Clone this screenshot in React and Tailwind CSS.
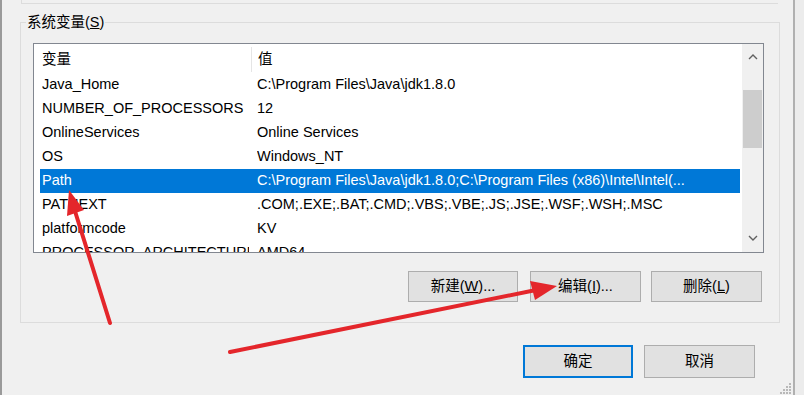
import React from "react";

const rows = [
  ["Java_Home", "C:\\Program Files\\Java\\jdk1.8.0"],
  ["NUMBER_OF_PROCESSORS", "12"],
  ["OnlineServices", "Online Services"],
  ["OS", "Windows_NT"],
  ["Path", "C:\\Program Files\\Java\\jdk1.8.0;C:\\Program Files (x86)\\Intel\\Intel(..."],
  ["PATHEXT", ".COM;.EXE;.BAT;.CMD;.VBS;.VBE;.JS;.JSE;.WSF;.WSH;.MSC"],
  ["platformcode", "KV"],
  ["PROCESSOR_ARCHITECTURE", "AMD64"],
];

function Chevron({ up }) {
  return (
    <svg width="10" height="6" viewBox="0 0 10 6">
      <polyline
        points={up ? "1,5 5,1 9,5" : "1,1 5,5 9,1"}
        fill="none"
        stroke="#606060"
        strokeWidth="1.4"
      />
    </svg>
  );
}

function Button({ children, className = "" }) {
  return (
    <div
      className={
        "flex items-center justify-center bg-[#e1e1e1] text-[14.5px] text-black " +
        className
      }
    >
      {children}
    </div>
  );
}

function VarList() {
  return (
    <div className="ml-[12px] mt-[11px] w-[731px] h-[210px] border border-[#828790] bg-white flex">
      <div className="flex-1 overflow-hidden">
        <div className="h-[28px] flex items-center text-[14.5px] pt-[3px]">
          <div className="w-[218px] h-full pl-[8px] flex items-center border-r border-[#e5e5e5]">变量</div>
          <div className="pl-[6px]">值</div>
        </div>
        <div className="pl-[6px] pt-[1px]">
          {rows.map(([name, value]) => {
            const sel = name === "Path";
            return (
              <div
                key={name}
                className={
                  "w-[700px] h-[24px] flex items-center text-[14.5px] whitespace-nowrap " +
                  (sel ? "bg-[#0078d7] text-white" : "text-black")
                }
              >
                <div className="w-[217px] pl-[2px]">
                  <div className="w-[207px] overflow-hidden">{name}</div>
                </div>
                <div className="flex-1 overflow-hidden">{value}</div>
              </div>
            );
          })}
        </div>
      </div>
      <div className="w-[21px] bg-[#f0f0f0] flex flex-col">
        <div className="h-[24px] flex items-center justify-center pt-[1px]">
          <Chevron up />
        </div>
        <div className="mt-[22px] mx-[1px] h-[58px] bg-[#cdcdcd]" />
        <div className="flex-1" />
        <div className="h-[24px] flex items-center justify-center pb-[4px]">
          <Chevron />
        </div>
      </div>
    </div>
  );
}

export default function App() {
  return (
    <div
      className="relative w-[804px] h-[395px] bg-[#f0f0f0] flex overflow-hidden text-black"
      style={{ fontFamily: '"Liberation Sans", "Noto Sans CJK SC", sans-serif' }}
    >
      <div className="w-[793px] h-full border-l-2 border-[#9a9a9a] flex flex-col">
        <div className="ml-[19px] w-[757px] h-[4px] border-l border-b border-[#dcdcdc]" />
        <fieldset className="mt-[8px] ml-[18px] w-[760px] h-[311px] border border-[#dcdcdc]">
          <legend className="ml-[5px] px-[1px] text-[14.5px] leading-[20px]">
            系统变量(<u>S</u>)
          </legend>
          <VarList />
          <div className="mt-[18px] w-[741px] flex justify-end">
            <Button className="w-[110px] h-[31px] border border-[#adadad]">
              新建(<u>W</u>)...
            </Button>
            <Button className="ml-[12px] w-[111px] h-[31px] border border-[#adadad]">
              编辑(<u>I</u>)...
            </Button>
            <Button className="ml-[10px] w-[111px] h-[31px] border border-[#adadad]">
              删除(<u>L</u>)
            </Button>
          </div>
        </fieldset>
        <div className="mt-[22px] flex justify-end pr-[38px]">
          <Button className="w-[110px] h-[33px] border-2 border-[#0078d7]">确定</Button>
          <Button className="ml-[11px] w-[111px] h-[33px] border border-[#adadad]">取消</Button>
        </div>
      </div>
      <div className="flex-1 h-full border-l-2 border-[#b0b0b0] bg-[#ececec]" />

      <svg className="absolute right-[12px] bottom-[1px]" width="12" height="11" viewBox="0 0 12 11">
        {[
          [9, 0], [6, 3], [9, 3], [3, 6], [6, 6], [9, 6], [0, 9], [3, 9], [6, 9], [9, 9],
        ].map(([x, y]) => (
          <rect key={x + "-" + y} x={x} y={y} width="2" height="2" fill="#b8b8b8" />
        ))}
      </svg>

      <svg className="absolute inset-0 pointer-events-none" width="804" height="395">
        <g stroke="#e4262b" strokeWidth="4" strokeLinecap="round" fill="#e4262b">
          <line x1="110" y1="323" x2="74" y2="208" />
          <line x1="230" y1="352" x2="536" y2="290" />
        </g>
        <polygon points="69,190 84,210 67,216" fill="#e4262b" />
        <polygon points="557,286 535,300 530,281" fill="#e4262b" />
      </svg>
    </div>
  );
}
